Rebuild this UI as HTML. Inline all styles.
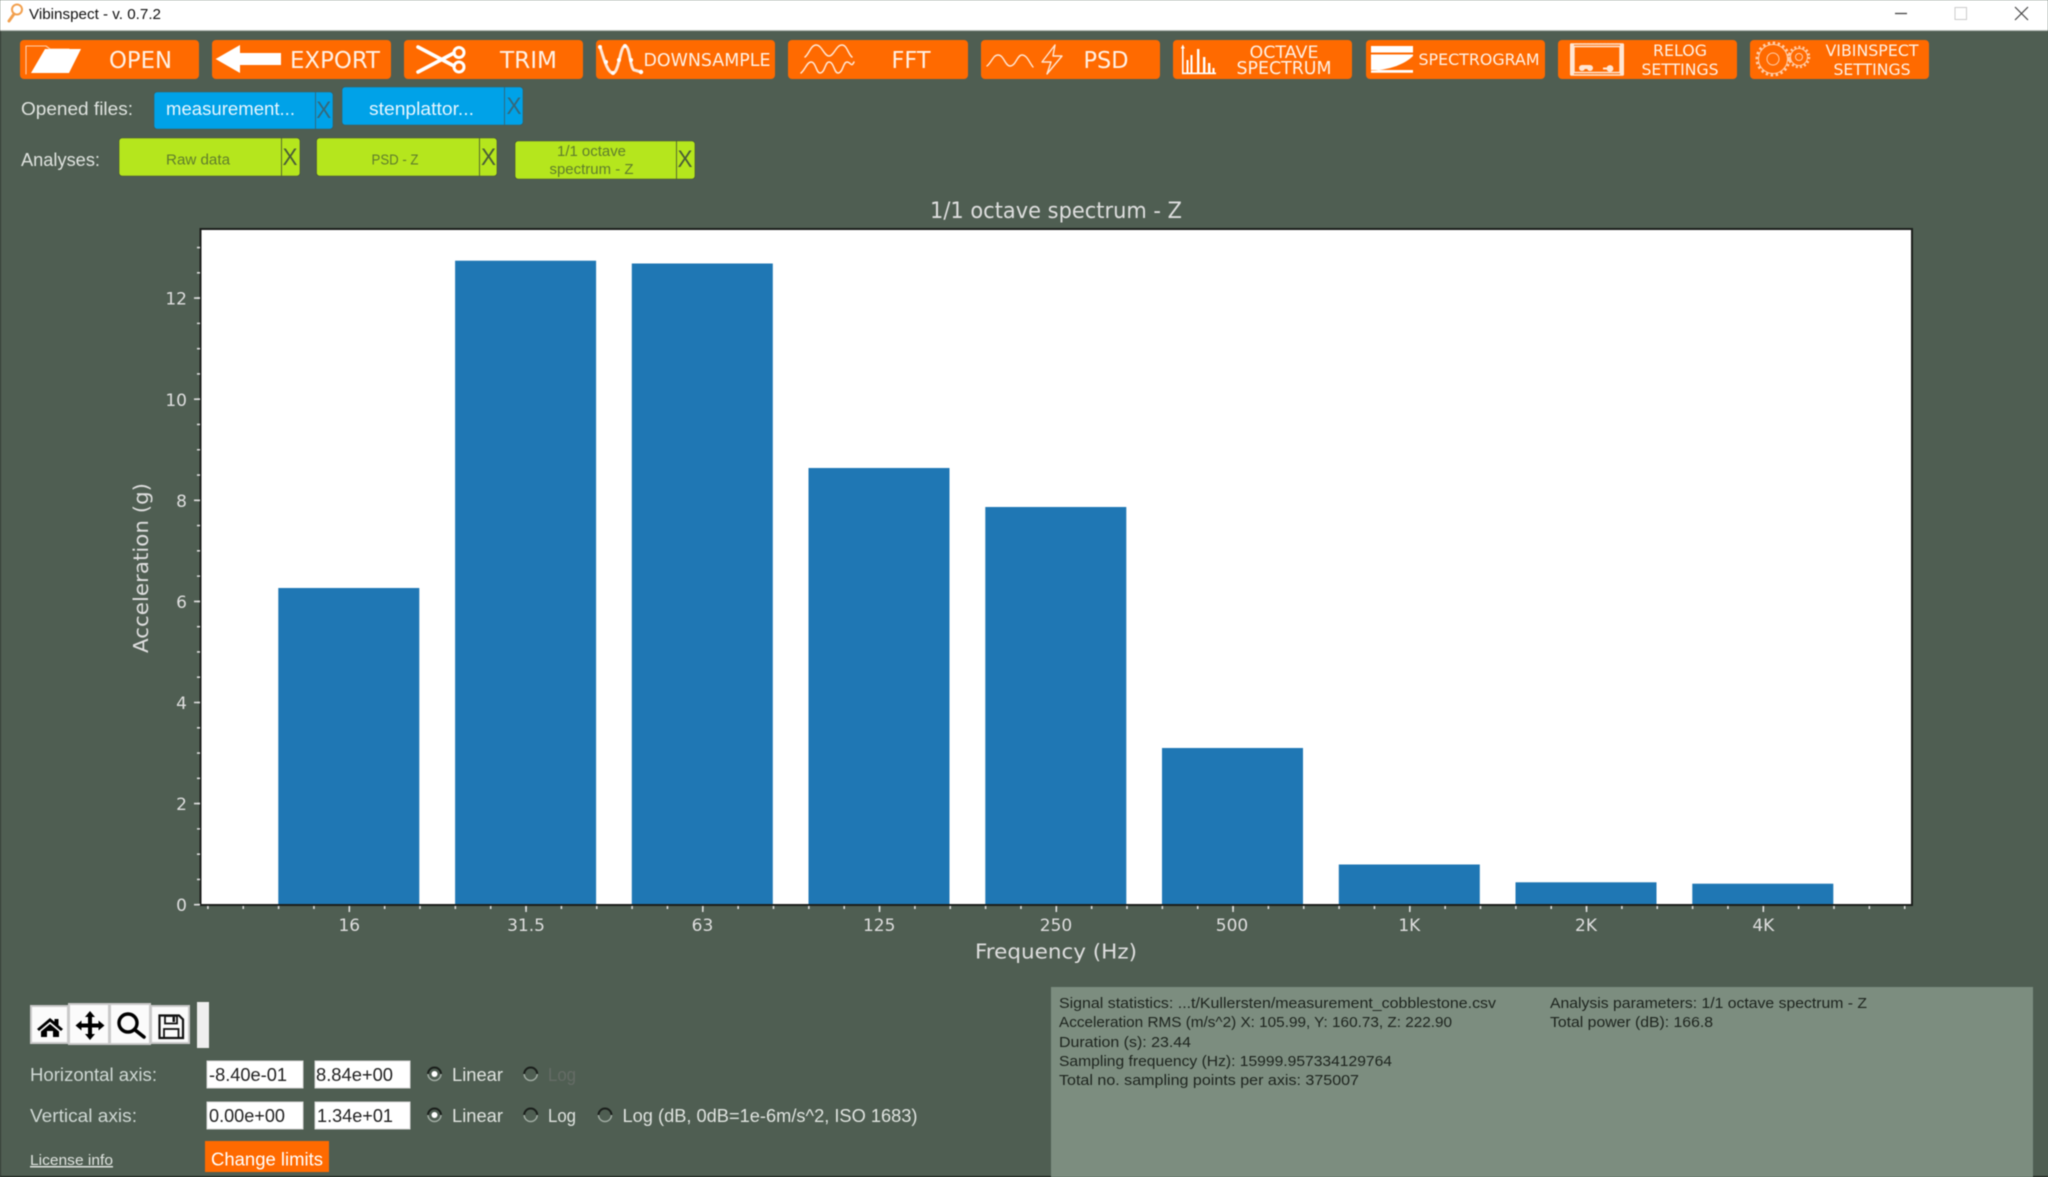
<!DOCTYPE html>
<html><head><meta charset="utf-8"><title>Vibinspect</title>
<style>
html,body{margin:0;padding:0;background:#4f5e52;width:2048px;height:1177px;overflow:hidden}
svg{display:block;filter:blur(.45px)}
.d{font-family:"DejaVu Sans",sans-serif}
.l{font-family:"Liberation Sans",sans-serif}
.b{fill:#ff6a00}
.bt{font-family:"DejaVu Sans",sans-serif;fill:#fff0e4;text-anchor:middle}
.ic{fill:none;stroke:#ffe6d4;stroke-linecap:round;stroke-linejoin:round}
.t{font-family:"DejaVu Sans",sans-serif;fill:#dedede;font-size:17px}
.lab{font-family:"Liberation Sans",sans-serif;fill:#dfe3df;font-size:18px}
.inp{fill:#fff;stroke:#d8d8d8;stroke-width:1}
.val{font-family:"Liberation Sans",sans-serif;fill:#222;font-size:18px}
.st{font-family:"Liberation Sans",sans-serif;fill:#1d241e;font-size:14.5px}
.tb{fill:#fbfbfb;stroke:#c9c9c9;stroke-width:2}
</style></head><body>
<svg width="2048" height="1177" viewBox="0 0 2048 1177" xmlns="http://www.w3.org/2000/svg">
<rect width="2048" height="1177" fill="#4f5e52"/>
<!-- title bar -->
<rect width="2048" height="30" fill="#fff"/>
<rect y="30" width="2048" height="1" fill="#b9bfb9"/>
<rect x="0" y="31" width="1" height="1146" fill="#333a34"/>
<rect y="1176" width="2048" height="1" fill="#181c18"/>
<circle cx="17" cy="9.5" r="5" fill="none" stroke="#f2a04e" stroke-width="2"/>
<path d="M14 14 L9 21" stroke="#f2a04e" stroke-width="3" stroke-linecap="round"/>
<text x="29" y="19" class="l" font-size="15" fill="#111" textLength="132" lengthAdjust="spacingAndGlyphs">Vibinspect - v. 0.7.2</text>
<path d="M1895 13.5H1907" stroke="#444" stroke-width="1.3"/>
<rect x="1955" y="7.5" width="11.5" height="12" fill="#fff" stroke="#ccc"/>
<path d="M2015 7L2028 20M2028 7L2015 20" stroke="#444" stroke-width="1.2"/>

<!-- top buttons -->
<rect class="b" x="20" y="40" width="179" height="39" rx="4"/>
<rect class="b" x="212" y="40" width="179" height="39" rx="4"/>
<rect class="b" x="404" y="40" width="179" height="39" rx="4"/>
<rect class="b" x="596" y="40" width="179" height="39" rx="4"/>
<rect class="b" x="788" y="40" width="180" height="39" rx="4"/>
<rect class="b" x="981" y="40" width="179" height="39" rx="4"/>
<rect class="b" x="1173" y="40" width="179" height="39" rx="4"/>
<rect class="b" x="1366" y="40" width="179" height="39" rx="4"/>
<rect class="b" x="1558" y="40" width="179" height="39" rx="4"/>
<rect class="b" x="1750" y="40" width="179" height="39" rx="4"/>

<text class="bt" x="140.5" y="68" font-size="23" textLength="63" lengthAdjust="spacingAndGlyphs">OPEN</text>
<text class="bt" x="335" y="68" font-size="23" textLength="90" lengthAdjust="spacingAndGlyphs">EXPORT</text>
<text class="bt" x="528.5" y="68" font-size="23" textLength="57" lengthAdjust="spacingAndGlyphs">TRIM</text>
<text class="bt" x="707" y="66" font-size="17.4" textLength="127" lengthAdjust="spacingAndGlyphs">DOWNSAMPLE</text>
<text class="bt" x="911" y="68" font-size="23" textLength="39" lengthAdjust="spacingAndGlyphs">FFT</text>
<text class="bt" x="1106" y="68" font-size="23" textLength="45" lengthAdjust="spacingAndGlyphs">PSD</text>
<text class="bt" x="1284" y="58" font-size="17" textLength="69" lengthAdjust="spacingAndGlyphs">OCTAVE</text>
<text class="bt" x="1284" y="74" font-size="17.4" textLength="95" lengthAdjust="spacingAndGlyphs">SPECTRUM</text>
<text class="bt" x="1479" y="65" font-size="15.8" textLength="121" lengthAdjust="spacingAndGlyphs">SPECTROGRAM</text>
<text class="bt" x="1680" y="56" font-size="15.6" textLength="54" lengthAdjust="spacingAndGlyphs">RELOG</text>
<text class="bt" x="1680" y="75" font-size="15.6" textLength="77" lengthAdjust="spacingAndGlyphs">SETTINGS</text>
<text class="bt" x="1872" y="56" font-size="15.6" textLength="93" lengthAdjust="spacingAndGlyphs">VIBINSPECT</text>
<text class="bt" x="1872" y="75" font-size="15.6" textLength="77" lengthAdjust="spacingAndGlyphs">SETTINGS</text>

<!-- open icon -->
<path class="ic" stroke-width="1.1" d="M26 74V46H46L50 49H69" opacity=".8"/>
<path fill="#fff" d="M31 73L45 49H81L69 73Z"/>
<!-- export icon -->
<path fill="#fff" d="M215.6 59L240 45V53H281V65H240V73Z"/>
<!-- trim icon -->
<g class="ic" style="stroke:#fff">
<path stroke-width="3.6" d="M418 47L454 66M418 72L454 53"/>
<circle cx="459" cy="52.5" r="5" stroke-width="3"/>
<circle cx="459" cy="67" r="5" stroke-width="3"/>
</g>
<!-- downsample icon -->
<path class="ic" stroke-width="3" stroke-dasharray="7 1" d="M600 47C603 55 607 73 613 73C619 73 620 46 625 46C630 46 630 68 634 70L641 72"/>
<g fill="#fff"><circle cx="600" cy="47" r="2"/><circle cx="606" cy="62" r="2"/><circle cx="613" cy="73" r="2"/><circle cx="619" cy="60" r="2"/><circle cx="625" cy="46" r="2"/><circle cx="631" cy="60" r="2"/><circle cx="641" cy="72" r="2.2"/></g>
<!-- fft icon -->
<g class="ic" stroke-width="1.5">
<path d="M805 57C809 54 811 45 816 45C822 45 824 56 829 56C834 56 836 45 842 45C847 45 848 54 852 57"/>
<path d="M801 73C805 70 807 62 811 62C816 62 816 73 820 73C825 73 825 62 829 62C834 62 834 73 838 73C843 73 843 62 847 62C851 62 851 68 854 62"/>
</g>
<!-- psd icon -->
<g class="ic" stroke-width="1.4">
<path d="M987 66C992 62 993 55 998 55C1004 55 1005 66 1010 66C1016 66 1017 55 1022 55C1027 55 1029 62 1033 67"/>
<path d="M1055 45L1042 62H1051L1047 74L1062 56H1053Z"/>
</g>
<!-- octave icon -->
<g fill="#fff">
<rect x="1182" y="47" width="1.6" height="27"/><path d="M1182.8 44.5l2 4h-4z"/>
<rect x="1182" y="72.5" width="34" height="1.7"/>
<rect x="1186.5" y="60" width="2" height="13"/>
<rect x="1190.5" y="55" width="2" height="18"/>
<rect x="1197" y="49" width="2.4" height="24"/>
<rect x="1203" y="57" width="2.4" height="16"/>
<rect x="1208" y="63" width="2.4" height="10"/>
<rect x="1212.5" y="68" width="2" height="5"/>
</g>
<!-- spectrogram icon -->
<rect x="1371" y="46" width="42" height="6.5" fill="#fff"/>
<rect x="1371" y="54.5" width="42" height="17.5" fill="#fff"/>
<path d="M1371 70.5C1390 70 1405 64 1413 56V70H1371Z" fill="#ff6a00"/>
<path d="M1371 72H1413" stroke="#fff" stroke-width="1.4"/>
<!-- relog icon -->
<g class="ic" stroke-width="1.4">
<rect x="1571" y="44" width="52" height="31" stroke-dasharray="3 1"/>
<rect x="1574" y="46.5" width="46" height="26"/>
</g>
<g fill="#ffe6d4">
<rect x="1570" y="44" width="4" height="31"/><rect x="1620" y="44" width="4" height="31"/>
<circle cx="1582" cy="68" r="3"/><circle cx="1590" cy="68" r="3"/><rect x="1582" y="65" width="8" height="4"/>
<circle cx="1610" cy="68.5" r="3.4"/><rect x="1603" y="67.5" width="7" height="2"/>
</g>
<!-- gears -->
<g class="ic" style="stroke-linecap:butt" opacity=".8">
<circle cx="1773" cy="59" r="14.5" stroke-width="1"/>
<circle cx="1773" cy="59" r="16" stroke-width="3" stroke-dasharray="2.4 2.6"/>
<circle cx="1773" cy="59" r="6" stroke-width="1"/>
<circle cx="1799" cy="57" r="8.5" stroke-width="1"/>
<circle cx="1799" cy="57" r="10" stroke-width="2.6" stroke-dasharray="2 2.2"/>
<circle cx="1799" cy="57" r="3.5" stroke-width="1"/>
</g>

<!-- opened files -->
<text class="lab" x="21" y="115" textLength="112" lengthAdjust="spacingAndGlyphs">Opened files:</text>
<rect x="154" y="92" width="179" height="37" rx="3" fill="#00a2e8" stroke="#3c5a5c" stroke-width=".6"/>
<rect x="315" y="92" width="1" height="37" fill="#2e6a80"/>
<text x="230.5" y="115" text-anchor="middle" class="l" font-size="18" fill="#e6f6ff" textLength="129" lengthAdjust="spacingAndGlyphs">measurement...</text>
<text x="323.8" y="118" text-anchor="middle" class="l" font-size="24" fill="#36687a" textLength="15" lengthAdjust="spacingAndGlyphs">X</text>
<rect x="342" y="87" width="181" height="38" rx="3" fill="#00a2e8" stroke="#3c5a5c" stroke-width=".6"/>
<rect x="504" y="87" width="1" height="38" fill="#2e6a80"/>
<text x="421.5" y="115" text-anchor="middle" class="l" font-size="18" fill="#e6f6ff" textLength="105" lengthAdjust="spacingAndGlyphs">stenplattor...</text>
<text x="514" y="114" text-anchor="middle" class="l" font-size="24" fill="#36687a" textLength="15" lengthAdjust="spacingAndGlyphs">X</text>

<!-- analyses -->
<text class="lab" x="21" y="166" textLength="79" lengthAdjust="spacingAndGlyphs">Analyses:</text>
<rect x="119" y="138" width="181" height="38" rx="3" fill="#b5e61d" stroke="#3e4a38" stroke-width=".6"/>
<rect x="281" y="138" width="1" height="38" fill="#566a2c"/>
<text x="198" y="164.5" text-anchor="middle" class="l" font-size="14.5" fill="#5f7d2c" textLength="64" lengthAdjust="spacingAndGlyphs">Raw data</text>
<text x="290" y="165" text-anchor="middle" class="l" font-size="24" fill="#495c38" textLength="15" lengthAdjust="spacingAndGlyphs">X</text>
<rect x="316.5" y="138" width="180.5" height="38" rx="3" fill="#b5e61d" stroke="#3e4a38" stroke-width=".6"/>
<rect x="479" y="138" width="1" height="38" fill="#566a2c"/>
<text x="395" y="164.5" text-anchor="middle" class="l" font-size="14.5" fill="#5f7d2c" textLength="47" lengthAdjust="spacingAndGlyphs">PSD - Z</text>
<text x="488.5" y="165" text-anchor="middle" class="l" font-size="24" fill="#495c38" textLength="15" lengthAdjust="spacingAndGlyphs">X</text>
<rect x="515" y="141" width="180" height="38" rx="3" fill="#b5e61d" stroke="#3e4a38" stroke-width=".6"/>
<rect x="676" y="141" width="1" height="38" fill="#566a2c"/>
<text x="591.5" y="156" text-anchor="middle" class="l" font-size="14.5" fill="#5f7d2c" textLength="69" lengthAdjust="spacingAndGlyphs">1/1 octave</text>
<text x="591.5" y="174" text-anchor="middle" class="l" font-size="14.5" fill="#5f7d2c" textLength="84" lengthAdjust="spacingAndGlyphs">spectrum - Z</text>
<text x="685" y="167" text-anchor="middle" class="l" font-size="24" fill="#495c38" textLength="15" lengthAdjust="spacingAndGlyphs">X</text>

<!-- chart -->
<text class="d" x="1056" y="218" text-anchor="middle" font-size="22.5" fill="#dedede" textLength="252" lengthAdjust="spacingAndGlyphs">1/1 octave spectrum - Z</text>
<rect x="200.5" y="229" width="1711.5" height="676" fill="#fff" stroke="#1c1f1c" stroke-width="2"/>
<g fill="#1f77b4">
<rect x="278.3" y="588" width="141" height="316"/>
<rect x="455.1" y="260.7" width="141" height="643.3"/>
<rect x="631.8" y="263.5" width="141" height="640.5"/>
<rect x="808.5" y="468" width="141" height="436"/>
<rect x="985.3" y="507" width="141" height="397"/>
<rect x="1162" y="748" width="141" height="156"/>
<rect x="1338.8" y="864.5" width="141" height="39.5"/>
<rect x="1515.5" y="882.3" width="141" height="21.7"/>
<rect x="1692.3" y="883.7" width="141" height="20.3"/>
</g>
<!-- ticks -->
<path d="M198.5 905.5V240" stroke="#dedede" stroke-width="3" fill="none" stroke-dasharray="1.6 23.675"/>
<path d="M197 905.5V290" stroke="#dedede" stroke-width="6" fill="none" stroke-dasharray="1.6 99.5"/>
<path d="M207.1 907.5H1908" stroke="#dedede" stroke-width="3" fill="none" stroke-dasharray="1.6 33.75"/>
<path d="M348.5 909H1770" stroke="#dedede" stroke-width="6" fill="none" stroke-dasharray="1.6 175.15"/>
<g class="t" text-anchor="end">
<text x="187" y="911">0</text>
<text x="187" y="810">2</text>
<text x="187" y="709">4</text>
<text x="187" y="608">6</text>
<text x="187" y="507">8</text>
<text x="187" y="406">10</text>
<text x="187" y="304.5">12</text>
</g>
<g class="t" text-anchor="middle">
<text x="349.3" y="931">16</text>
<text x="526" y="931">31.5</text>
<text x="702.5" y="931">63</text>
<text x="879.2" y="931">125</text>
<text x="1056" y="931">250</text>
<text x="1232" y="931">500</text>
<text x="1409.3" y="931">1K</text>
<text x="1586" y="931">2K</text>
<text x="1763.3" y="931">4K</text>
</g>
<text class="d" x="1056" y="958.5" text-anchor="middle" font-size="20.5" fill="#dedede" textLength="162" lengthAdjust="spacingAndGlyphs">Frequency (Hz)</text>
<text class="d" transform="translate(148 568) rotate(-90)" text-anchor="middle" font-size="20.5" fill="#dedede" textLength="170" lengthAdjust="spacingAndGlyphs">Acceleration (g)</text>

<!-- toolbar -->
<rect class="tb" x="31" y="1006" width="37" height="37"/>
<rect class="tb" x="69" y="1004" width="40" height="40"/>
<rect class="tb" x="110" y="1004" width="40" height="40"/>
<rect class="tb" x="151" y="1006" width="38" height="37"/>
<rect x="197" y="1002" width="12" height="46" fill="#efefef"/>
<path fill="#000" d="M37 1029L50 1018L54.5 1021.8V1019H58.5V1025.2L63 1029L61 1031L50 1021.8L39 1031ZM41 1031.5L50 1024L59 1031.5V1037H53V1031H47V1037H41Z"/>
<path fill="#000" d="M90 1011L95 1017H92V1023.5H98.5V1020.5L104.5 1025.5L98.5 1030.5V1027.5H92V1034H95L90 1040L85 1034H88V1027.5H81.5V1030.5L75.5 1025.5L81.5 1020.5V1023.5H88V1017H85Z"/>
<circle cx="128" cy="1023" r="9" fill="none" stroke="#000" stroke-width="3.4"/>
<path d="M134.5 1029.5L144 1037" stroke="#000" stroke-width="3.6" stroke-linecap="round"/>
<path d="M159.5 1015.5H179L183 1019.5V1038H159.5Z" fill="none" stroke="#111" stroke-width="2.2"/>
<rect x="165" y="1016" width="12" height="7.5" fill="none" stroke="#111" stroke-width="1.8"/>
<rect x="172.5" y="1017" width="2.5" height="5" fill="#111"/>
<rect x="164" y="1029" width="14.5" height="9" fill="none" stroke="#111" stroke-width="1.8"/>

<!-- axis controls -->
<text class="lab" x="30" y="1081" textLength="127" lengthAdjust="spacingAndGlyphs" style="fill:#cfd8d4">Horizontal axis:</text>
<text class="lab" x="30" y="1122" textLength="107" lengthAdjust="spacingAndGlyphs" style="fill:#cfd8d4">Vertical axis:</text>
<rect class="inp" x="207" y="1061" width="96" height="27"/>
<rect class="inp" x="315" y="1061" width="95" height="27"/>
<rect class="inp" x="207" y="1102" width="96" height="27"/>
<rect class="inp" x="315" y="1102" width="95" height="27"/>
<text class="val" x="209" y="1081" textLength="78" lengthAdjust="spacingAndGlyphs">-8.40e-01</text>
<text class="val" x="316" y="1081" textLength="77" lengthAdjust="spacingAndGlyphs">8.84e+00</text>
<text class="val" x="209" y="1122" textLength="76" lengthAdjust="spacingAndGlyphs">0.00e+00</text>
<text class="val" x="317" y="1122" textLength="76" lengthAdjust="spacingAndGlyphs">1.34e+01</text>

<g fill="none" stroke-width="2">
<g stroke="#1a1e1b">
<path d="M428 1074a6.5 6.5 0 0 1 13 0"/><path d="M428 1115a6.5 6.5 0 0 1 13 0"/>
<path d="M524.2 1074a6.5 6.5 0 0 1 13 0"/><path d="M524.2 1115a6.5 6.5 0 0 1 13 0"/>
<path d="M598.5 1115a6.5 6.5 0 0 1 13 0"/>
</g>
<g stroke="#a3aea5" stroke-width="1.4">
<path d="M428 1074a6.5 6.5 0 0 0 13 0"/><path d="M428 1115a6.5 6.5 0 0 0 13 0"/>
<path d="M524.2 1074a6.5 6.5 0 0 0 13 0"/><path d="M524.2 1115a6.5 6.5 0 0 0 13 0"/>
<path d="M598.5 1115a6.5 6.5 0 0 0 13 0"/>
</g>
</g>
<circle cx="434.5" cy="1074" r="3" fill="#fff"/>
<circle cx="434.5" cy="1115" r="3" fill="#fff"/>
<text class="lab" x="452" y="1081" textLength="51" lengthAdjust="spacingAndGlyphs">Linear</text>
<text class="lab" x="548" y="1081" textLength="28" lengthAdjust="spacingAndGlyphs" style="fill:#656c66">Log</text>
<text class="lab" x="452" y="1122" textLength="51" lengthAdjust="spacingAndGlyphs">Linear</text>
<text class="lab" x="548" y="1122" textLength="28" lengthAdjust="spacingAndGlyphs">Log</text>
<text class="lab" x="622.5" y="1122" textLength="295" lengthAdjust="spacingAndGlyphs">Log (dB, 0dB=1e-6m/s^2, ISO 1683)</text>

<text class="l" x="30" y="1165" font-size="15" fill="#dfe3df" text-decoration="underline" textLength="83" lengthAdjust="spacingAndGlyphs">License info</text>
<rect x="205" y="1141" width="124" height="31" fill="#ff6a00"/>
<text class="l" x="211" y="1165.5" font-size="18" fill="#fff" textLength="112" lengthAdjust="spacingAndGlyphs">Change limits</text>

<!-- stats panel -->
<rect x="1051" y="987" width="982" height="190" fill="#7c8d7f"/>
<text class="st" x="1059" y="1008" textLength="437" lengthAdjust="spacingAndGlyphs">Signal statistics: ...t/Kullersten/measurement_cobblestone.csv</text>
<text class="st" x="1059" y="1027" textLength="393" lengthAdjust="spacingAndGlyphs">Acceleration RMS (m/s^2) X: 105.99, Y: 160.73, Z: 222.90</text>
<text class="st" x="1059" y="1047" textLength="132" lengthAdjust="spacingAndGlyphs">Duration (s): 23.44</text>
<text class="st" x="1059" y="1066" textLength="333" lengthAdjust="spacingAndGlyphs">Sampling frequency (Hz): 15999.957334129764</text>
<text class="st" x="1059" y="1085" textLength="300" lengthAdjust="spacingAndGlyphs">Total no. sampling points per axis: 375007</text>
<text class="st" x="1550" y="1008" textLength="317" lengthAdjust="spacingAndGlyphs">Analysis parameters: 1/1 octave spectrum - Z</text>
<text class="st" x="1550" y="1027" textLength="163" lengthAdjust="spacingAndGlyphs">Total power (dB): 166.8</text>
</svg>
</body></html>
